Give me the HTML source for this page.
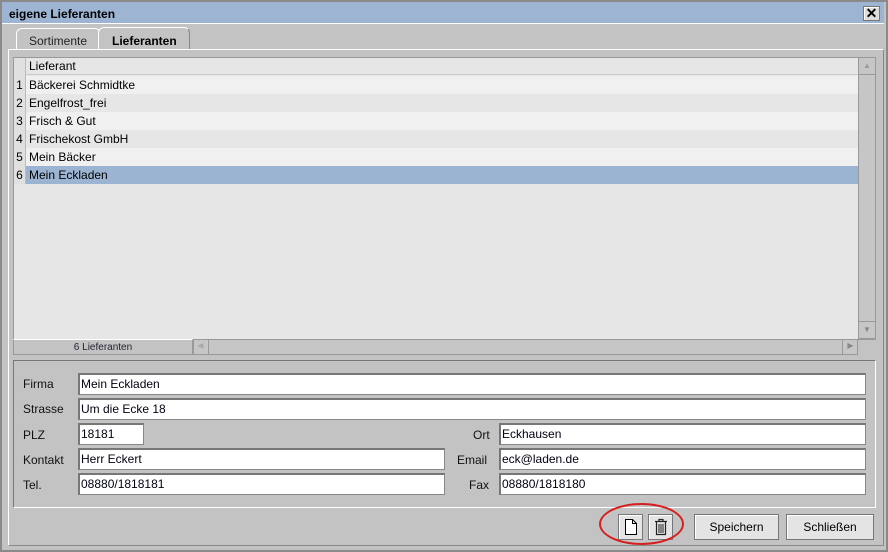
<!DOCTYPE html>
<html><head><style>
*{margin:0;padding:0;box-sizing:border-box}
body{width:888px;height:552px;background:#fff;font-family:"Liberation Sans",sans-serif;font-size:12px;color:#000;position:relative;overflow:hidden}
.abs{position:absolute}
.win{left:0;top:0;width:888px;height:552px;background:#c3c3c3;border:2px solid #8a8a8a}
.title{left:2px;top:2px;width:882px;height:22px;background:#9db5d2;border-bottom:1px solid #fff;font-weight:bold;font-size:12px;padding:5px 7px}
.row{left:14px;width:844px;height:18px;font-size:12px;line-height:18px;display:flex}
.row .n{width:12px;text-align:center;background:#e0e0e0;border-right:1px solid #bbb;height:18px;flex:none}
.row .t{padding-left:3px}
.lbl{font-size:12px;color:#111}
.inp{background:#fff;border:1px solid #888;border-top:2px solid #777;border-left:2px solid #777;height:22px;font-size:12px;padding:2px 1px;color:#001}
.btn{background:#e4e4e4;border:1px solid #777;box-shadow:inset 1px 1px #fff;font-size:12px;text-align:center;line-height:24px}
</style></head><body>
<div class="abs win"></div>
<div class="abs title">eigene Lieferanten</div>
<div class="abs btn" style="left:863px;top:6px;width:17px;height:15px;line-height:13px;font-weight:bold;font-size:14px;background:#ddd">✕</div>
<div class="abs" style="left:16px;top:28px;width:85px;height:22px;background:#c3c3c3;border:1px solid #fff;border-bottom:none;border-radius:6px 6px 0 0;padding:5px 12px;color:#222">Sortimente</div>
<div class="abs" style="left:98px;top:27px;width:92px;height:23px;background:#c3c3c3;border:1px solid #fff;border-right:1px solid #888;border-bottom:none;border-radius:6px 6px 0 0;padding:6px 13px;font-weight:bold">Lieferanten</div>
<div class="abs" style="left:8px;top:49px;width:876px;height:497px;border:1px solid #fff;border-right:1px solid #888;border-bottom:1px solid #888"></div>
<div class="abs" style="left:13px;top:57px;width:846px;height:283px;background:#e6e6e6;border:1px solid #999"></div>
<div class="abs row" style="top:58px;height:17px;line-height:17px;background:#e6e6e6;border-bottom:1px solid #ccc"><div class="n"></div><div class="t">Lieferant</div></div>
<div class="abs row" style="top:76px;background:#f0f0f0"><div class="n">1</div><div class="t">Bäckerei Schmidtke</div></div>
<div class="abs row" style="top:94px;background:#e6e6e6"><div class="n">2</div><div class="t">Engelfrost_frei</div></div>
<div class="abs row" style="top:112px;background:#f0f0f0"><div class="n">3</div><div class="t">Frisch &amp; Gut</div></div>
<div class="abs row" style="top:130px;background:#e6e6e6"><div class="n">4</div><div class="t">Frischekost GmbH</div></div>
<div class="abs row" style="top:148px;background:#f0f0f0"><div class="n">5</div><div class="t">Mein Bäcker</div></div>
<div class="abs row" style="top:166px;background:#9bb4d1"><div class="n">6</div><div class="t">Mein Eckladen</div></div>
<div class="abs" style="left:858px;top:57px;width:18px;height:283px;background:#c6c6c6;border:1px solid #999"></div>
<div class="abs" style="left:858px;top:57px;width:18px;height:18px;border:1px solid #999;color:#999;font-size:8px;text-align:center;line-height:16px">▲</div>
<div class="abs" style="left:858px;top:321px;width:18px;height:18px;border:1px solid #999;color:#888;font-size:8px;text-align:center;line-height:16px">▼</div>
<div class="abs" style="left:13px;top:339px;width:180px;height:16px;background:#c3c3c3;border:1px solid #999;border-top:1px solid #fff;font-size:10px;text-align:center;line-height:16px;color:#223">6 Lieferanten</div>
<div class="abs" style="left:193px;top:339px;width:665px;height:16px;background:#c6c6c6;border:1px solid #999"></div>
<div class="abs" style="left:193px;top:339px;width:16px;height:16px;border-right:1px solid #999;color:#aaa;font-size:8px;text-align:center;line-height:14px">◀</div>
<div class="abs" style="left:842px;top:339px;width:16px;height:16px;border-left:1px solid #999;color:#888;font-size:8px;text-align:center;line-height:14px">▶</div>
<div class="abs" style="left:13px;top:360px;width:863px;height:148px;border:1px solid #777;border-right:1px solid #fff;border-bottom:1px solid #fff"></div>
<div class="abs lbl" style="left:23px;top:377px">Firma</div>
<div class="abs inp" style="left:78px;top:373px;width:788px">Mein Eckladen</div>
<div class="abs lbl" style="left:23px;top:402px">Strasse</div>
<div class="abs inp" style="left:78px;top:398px;width:788px">Um die Ecke 18</div>
<div class="abs lbl" style="left:23px;top:428px">PLZ</div>
<div class="abs inp" style="left:78px;top:423px;width:66px">18181</div>
<div class="abs lbl" style="left:473px;top:428px">Ort</div>
<div class="abs inp" style="left:499px;top:423px;width:367px">Eckhausen</div>
<div class="abs lbl" style="left:23px;top:453px">Kontakt</div>
<div class="abs inp" style="left:78px;top:448px;width:367px">Herr Eckert</div>
<div class="abs lbl" style="left:457px;top:453px">Email</div>
<div class="abs inp" style="left:499px;top:448px;width:367px">eck@laden.de</div>
<div class="abs lbl" style="left:23px;top:478px">Tel.</div>
<div class="abs inp" style="left:78px;top:473px;width:367px">08880/1818181</div>
<div class="abs lbl" style="left:469px;top:478px">Fax</div>
<div class="abs inp" style="left:499px;top:473px;width:367px">08880/1818180</div>
<div class="abs btn" style="left:618px;top:514px;width:25px;height:26px"></div>
<svg class="abs" style="left:624px;top:518px" width="14" height="18" viewBox="0 0 14 18"><path d="M1.5 1.5h7l4 4v11h-11z" fill="#fff" stroke="#000"/><path d="M8.5 1.5v4h4" fill="none" stroke="#000"/></svg>
<div class="abs btn" style="left:648px;top:514px;width:25px;height:26px"></div>
<svg class="abs" style="left:653px;top:518px" width="16" height="18" viewBox="0 0 16 18"><path d="M2 3.5h12M6 3.5v-2h4v2M3.5 4v12.5h9V4" fill="none" stroke="#222" stroke-width="1.2"/><path d="M6 6v9M8 6v9M10 6v9" stroke="#222"/></svg>
<div class="abs btn" style="left:694px;top:514px;width:85px;height:26px">Speichern</div>
<div class="abs btn" style="left:786px;top:514px;width:88px;height:26px">Schließen</div>
<div class="abs" style="left:599px;top:503px;width:85px;height:42px;border:2px solid #d42020;border-radius:50%"></div>
</body></html>
